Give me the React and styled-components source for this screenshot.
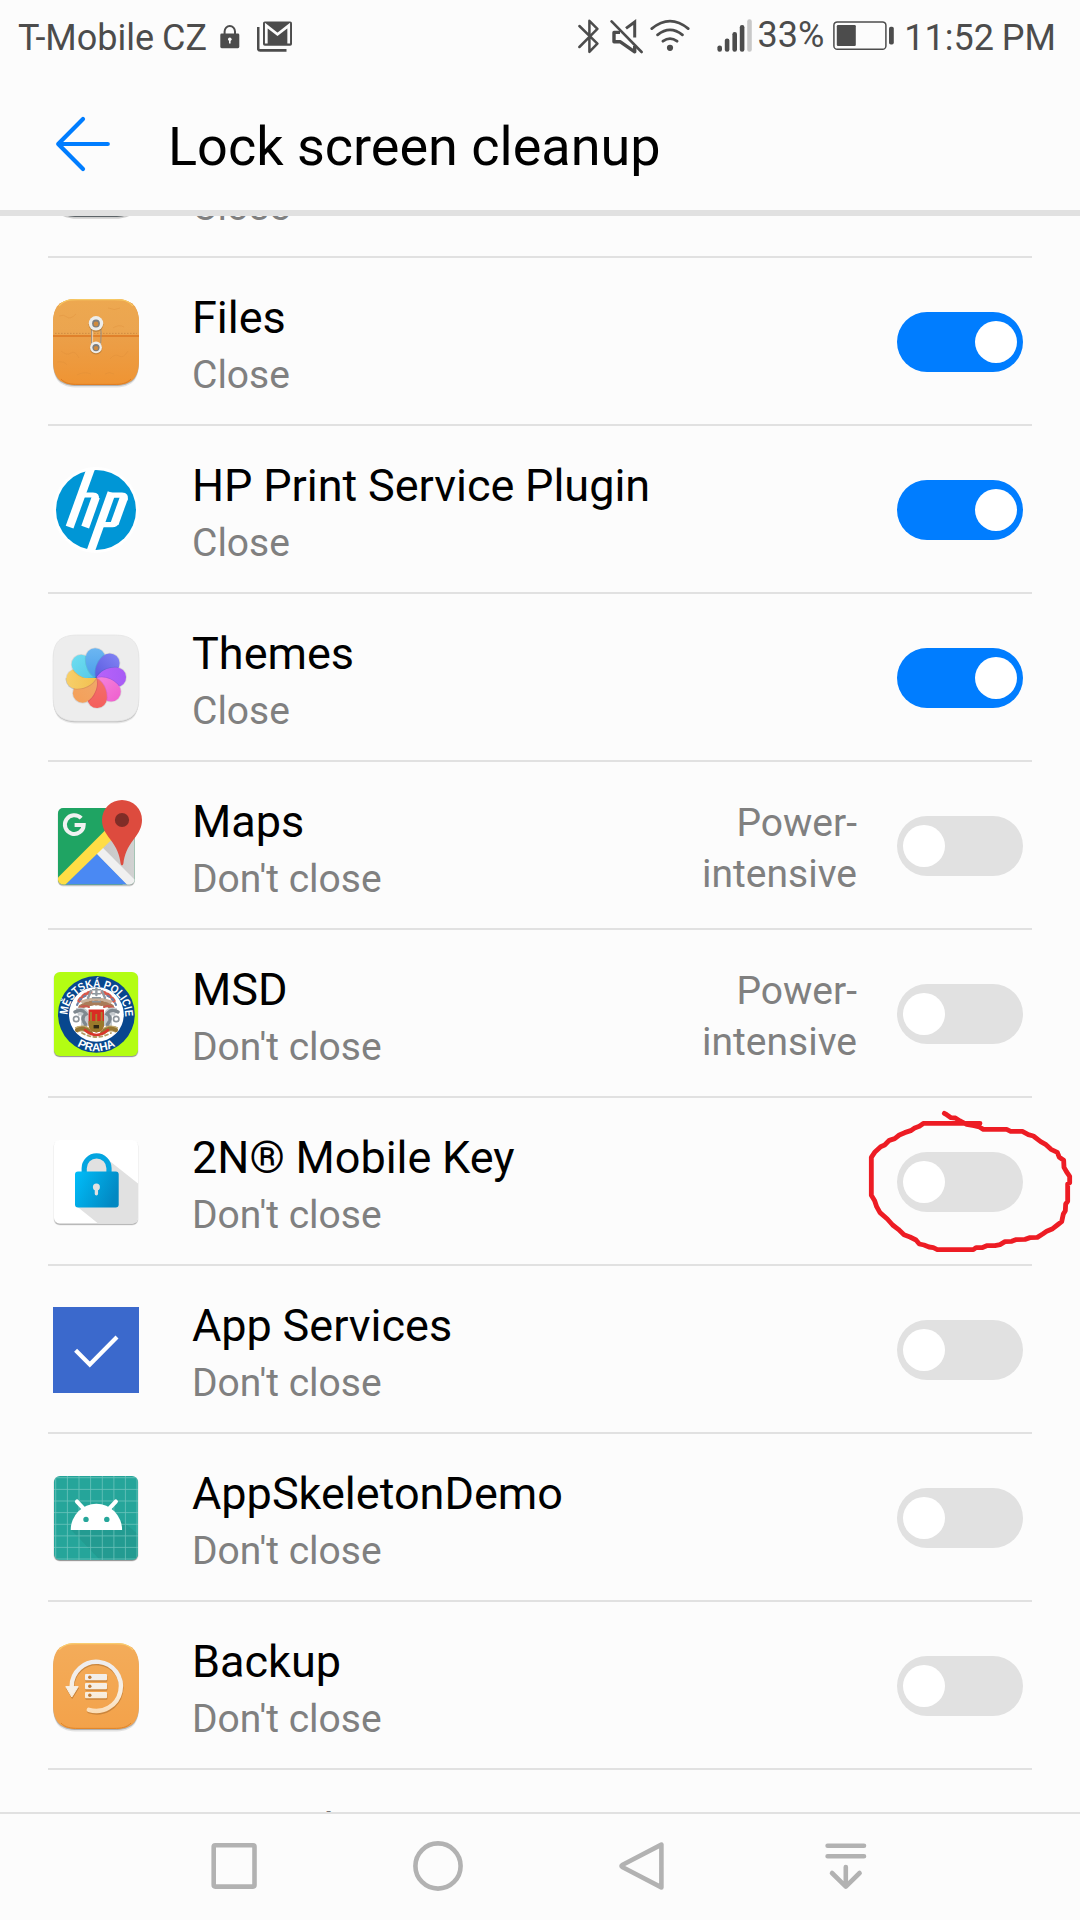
import React from 'react';
import styled, { createGlobalStyle } from 'styled-components';

const GlobalStyle = createGlobalStyle`
  *, *::before, *::after { box-sizing: border-box; }
  html, body { margin: 0; padding: 0; background: #fcfcfc; }
  body { overflow: hidden; }
`;

const Screen = styled.div`
  width: 1080px;
  height: 1920px;
  display: flex;
  flex-direction: column;
  background: #fcfcfc;
  font-family: Roboto, 'Liberation Sans', sans-serif;
  color: #000;
  overflow: hidden;
`;

const StatusBar = styled.div`
  flex: none;
  height: 72px;
  display: flex;
  align-items: flex-start;
  padding: 0 24px 0 18px;
  color: #4c4c4c;
`;

const StatusText = styled.span`
  font-size: 36px;
  line-height: 42px;
  white-space: nowrap;
  margin-top: ${(p) => p.$top}px;
  margin-left: ${(p) => p.$gap || 0}px;
  word-spacing: -1px;
`;

const StatusIcon = styled.svg`
  flex: none;
  display: block;
  margin-top: ${(p) => p.$top}px;
  margin-left: ${(p) => p.$gap || 0}px;
`;

const StatusGroup = styled.div`
  display: flex;
  align-items: flex-start;
  margin-left: ${(p) => (p.$end ? 'auto' : '0')};
`;

const TitleBar = styled.header`
  flex: none;
  height: 144px;
  display: flex;
  align-items: center;
  padding: 6px 54px 0;
  border-bottom: 6px solid #e1e1e1;
`;

const BackButton = styled.button`
  width: 58px;
  height: 58px;
  padding: 0;
  border: 0;
  background: none;
  display: flex;
`;

const Title = styled.h1`
  margin: 0 0 0 56px;
  padding-top: 6px;
  font-size: 54px;
  line-height: 64px;
  font-weight: 400;
  white-space: nowrap;
`;

const List = styled.main`
  flex: none;
  height: 1596px;
  overflow: hidden;
  padding: 0 48px;
`;

const Rows = styled.ul`
  list-style: none;
  margin: -126px 0 0;
  padding: 0;
`;

const Row = styled.li`
  height: 168px;
  display: flex;
  align-items: center;
  padding: 2px 9px 0 5px;
  border-bottom: 2px solid #e1e1e1;
`;

const AppIcon = styled.svg`
  flex: none;
  display: block;
  width: 86px;
  height: 86px;
  overflow: visible;
`;

const Labels = styled.div`
  flex: 1;
  min-width: 0;
  display: flex;
  flex-direction: column;
  gap: 8px;
  margin-left: 53px;
  padding-top: 5px;
`;

const AppName = styled.div`
  min-height: 53px;
  font-size: 45px;
  line-height: 53px;
  word-spacing: -0.5px;
  white-space: nowrap;
`;

const AppState = styled.div`
  min-height: 46px;
  font-size: 39px;
  line-height: 46px;
  color: #808080;
  white-space: nowrap;
`;

const Note = styled.div`
  width: 180px;
  margin-right: 40px;
  padding-top: 6px;
  font-size: 39px;
  line-height: 51px;
  text-align: right;
  color: #808080;
`;

const ToggleWrap = styled.div`
  position: relative;
  flex: none;
`;

const Toggle = styled.div`
  width: 126px;
  height: 60px;
  border-radius: 30px;
  padding: 0 6px;
  display: flex;
  align-items: center;
  justify-content: ${(p) => (p.$on ? 'flex-end' : 'flex-start')};
  background: ${(p) => (p.$on ? '#007dff' : '#e1e1e1')};
`;

const Knob = styled.span`
  width: 42px;
  height: 42px;
  border-radius: 50%;
  background: #fff;
`;

const Scribble = styled.svg`
  position: absolute;
  left: -47px;
  top: -62px;
  width: 230px;
  height: 180px;
  overflow: visible;
  pointer-events: none;
`;

const NavBar = styled.nav`
  flex: none;
  height: 108px;
  display: flex;
  justify-content: center;
  border-top: 2px solid #e1e1e1;
`;

const NavButton = styled.button`
  width: 204px;
  height: 104px;
  padding: 0;
  border: 0;
  background: none;
  display: flex;
  align-items: center;
  justify-content: center;
`;

const NavGlyph = styled.svg`
  display: block;
  width: 60px;
  height: 60px;
  fill: none;
  stroke: #b2b2b2;
  stroke-width: 4.6;
  stroke-linecap: round;
  stroke-linejoin: round;
`;

/* ---------- app icons, all on an 86 unit square ---------- */

const Shadow = ({ r = 6, o = 0.3, inset = 1 }) => (
  <>
    <rect x={inset - 0.5} y={inset + 0.5} width={87 - inset * 2} height={87 - inset * 2} rx={r} fill="#000" opacity={o * 0.4} />
    <rect x={inset} y={inset + 1} width={86 - inset * 2} height={86 - inset * 2} rx={r} fill="#000" opacity={o} />
  </>
);

const SQUIRCLE =
  'M0 25 C0 7 7 0 25 0 H61 C79 0 86 7 86 25 V61 C86 79 79 86 61 86 H25 C7 86 0 79 0 61 Z';

const HiddenIcon = () => (
  <AppIcon viewBox="0 0 86 86">
    <path d={SQUIRCLE} fill="#000" opacity="0.18" transform="translate(0 1.8)" />
    <path d={SQUIRCLE} fill="#5d6468" />
  </AppIcon>
);

const EmptyIcon = () => <AppIcon viewBox="0 0 86 86" />;

const FilesIcon = () => (
  <AppIcon viewBox="0 0 86 86">
    <defs>
      <linearGradient id="filesTop" x1="0" y1="0" x2="0" y2="1">
        <stop offset="0" stopColor="#eda850" />
        <stop offset="1" stopColor="#e8a04e" />
      </linearGradient>
      <linearGradient id="filesBody" x1="0" y1="0" x2="0" y2="1">
        <stop offset="0.4" stopColor="#eba04a" />
        <stop offset="1" stopColor="#ef9433" />
      </linearGradient>
      <clipPath id="filesFlap"><rect x="0" y="0" width="86" height="37" /></clipPath>
    </defs>
    <path d={SQUIRCLE} fill="#000" opacity="0.1" transform="translate(0 2.4)" />
    <path d={SQUIRCLE} fill="#000" opacity="0.22" transform="translate(0 1)" />
    <path d={SQUIRCLE} fill="url(#filesBody)" />
    <path d={SQUIRCLE} fill="url(#filesTop)" clipPath="url(#filesFlap)" />
    <path d="M6 7 C10 1.5 16 .7 25 .7 H61 C70 .7 76 1.5 80 7" fill="none" stroke="#f7c964" strokeWidth="1.2" />
    <path d="M8 80 C12 84.6 18 85.4 25 85.4 H61 C68 85.4 74 84.6 78 80" fill="none" stroke="#dd7c22" strokeWidth="1" />
    <path d="M0 37 H86" stroke="#e0812b" strokeWidth="1.8" />
    <path d="M2 34.4 H84" stroke="#c98740" strokeWidth="0.8" strokeDasharray="1.6 1.4" />
    <g fill="none" stroke="#d98a37" strokeWidth="0.6" opacity="0.55">
      <path d="M6 17 q5 -2 8 1 t9 -3 M55 9 q7 3 12 0 M60 29 q6 -4 11 -1 M8 52 q6 5 10 2 t8 5 M57 60 q5 -6 9 -3 t9 -5 M24 76 q7 -4 14 -1 M52 75 q4 -3 9 0 M4 63 q8 -1 10 3" />
    </g>
    <path d="M38.6 28 V48 M47.6 28 C49 36 47.6 41 47.4 48" fill="none" stroke="#9c9184" strokeWidth="1.1" />
    <path d="M39.6 30 V46" fill="none" stroke="#f3dcc0" strokeWidth="0.8" />
    <circle cx="43" cy="25.4" r="7.5" fill="#9c6a30" opacity="0.5" />
    <circle cx="43" cy="24.3" r="7.2" fill="#ededeb" />
    <circle cx="43" cy="24.5" r="3.9" fill="#7d7d7d" />
    <circle cx="43" cy="25" r="2.4" fill="#d08a3c" />
    <circle cx="43" cy="49.4" r="6.2" fill="#9c6a30" opacity="0.5" />
    <circle cx="43" cy="48.4" r="5.9" fill="#ededeb" />
    <circle cx="43" cy="48.6" r="3.6" fill="#7d7d7d" />
    <circle cx="43" cy="49.1" r="2.2" fill="#d08a3c" />
  </AppIcon>
);

const HpIcon = () => (
  <AppIcon viewBox="0 0 86 86">
    <defs><clipPath id="hpDisc"><circle cx="43" cy="43" r="41" /></clipPath></defs>
    <circle cx="43" cy="43" r="43" fill="#fff" />
    <circle cx="43" cy="43" r="40" fill="#0096d6" />
    <g clipPath="url(#hpDisc)" fill="none" stroke="#fff" strokeLinejoin="round">
      <path d="M38 1 L16.6 60.2" strokeWidth="8.2" />
      <path d="M30 28 H40 Q44.6 28 43 32" strokeWidth="5.2" />
      <path d="M42.9 30 L32.2 60.2" strokeWidth="8.2" />
      <path d="M58.6 25.6 L37.4 85" strokeWidth="8.2" />
      <path d="M56 28.1 H69 Q73.6 28.1 72 32.5" strokeWidth="5.2" />
      <path d="M71.2 30 L61.6 56.6" strokeWidth="8.2" />
      <path d="M63.5 55 Q62.4 57.7 59.5 57.7 H48" strokeWidth="5.2" />
    </g>
  </AppIcon>
);

const PETALS = [
  [270, '#f7cf6a', '#f2c050'],
  [315, '#6cdcf0', '#55c8e8'],
  [0, '#6cb6f2', '#4a9fea'],
  [45, '#7f80f2', '#5a5ce0'],
  [90, '#a75cf5', '#b862fa'],
  [135, '#ef62cf', '#f583dc'],
  [180, '#f45f5c', '#f4706c'],
  [225, '#f4a05a', '#f0a868'],
];
const PETAL = 'M0 0 C-7 -3.5 -11 -12 -10.6 -19.8 A9.7 9.7 0 0 1 8.9 -20.5 C9.6 -14 8 -7 0 0 Z';

const Petal = ({ angle, color }) => (
  <g transform={`rotate(${angle})`}>
    <path d={PETAL} fill="none" stroke="#222" strokeWidth="1.6" opacity="0.1" />
    <path d={PETAL} fill={color} />
  </g>
);

const ThemesIcon = () => (
  <AppIcon viewBox="0 0 86 86">
    <defs>
      {PETALS.map(([a, tip, root]) => (
        <linearGradient key={a} id={`petal${a}`} x1="0" y1="0" x2="0" y2="1">
          <stop offset="0" stopColor={tip} />
          <stop offset="1" stopColor={root} />
        </linearGradient>
      ))}
      <clipPath id="lowerHalf"><rect x="-32" y="0" width="32" height="32" /></clipPath>
    </defs>
    <path d={SQUIRCLE} fill="#000" opacity="0.08" transform="translate(0 2.6)" />
    <path d={SQUIRCLE} fill="#000" opacity="0.17" transform="translate(0 1.3)" />
    <path d={SQUIRCLE} fill="#ededed" stroke="#e4e4e4" strokeWidth="0.8" />
    <g transform="translate(43.2 43.1)">
      {PETALS.map(([a]) => <Petal key={a} angle={a} color={`url(#petal${a})`} />)}
      <g clipPath="url(#lowerHalf)"><Petal angle={270} color="url(#petal270)" /></g>
    </g>
  </AppIcon>
);

const MapsIcon = () => (
  <AppIcon viewBox="0 0 86 86">
    <defs>
      <clipPath id="mapTile"><rect x="5" y="5" width="76.6" height="76.4" rx="5" /></clipPath>
      <linearGradient id="mapGrey" x1="0" y1="0" x2="1" y2="0">
        <stop offset="0" stopColor="#c4c4c4" />
        <stop offset="1" stopColor="#d2d2d2" />
      </linearGradient>
    </defs>
    <rect x="4.6" y="6" width="77.4" height="77.4" rx="5.4" fill="#000" opacity="0.12" />
    <rect x="5" y="6" width="76.6" height="76.6" rx="5" fill="#000" opacity="0.22" />
    <g clipPath="url(#mapTile)">
      <rect x="5" y="5" width="77" height="77" fill="#1fa463" />
      <path d="M43.3 50.3 L82 10 V82 H70 Z" fill="url(#mapGrey)" />
      <path d="M12.5 81.5 L43.3 50.3 L74 81.5 Z" fill="#4a89f3" />
      <path d="M43.3 50.3 L49.3 44.3 L84 79 V84 H76.5 Z" fill="#f0f0f0" />
      <path d="M2 77.6 L58 21.6 L66 29.4 L10 84 Z" fill="#ffdd45" />
    </g>
    <path d="M28.2 15.2 A9.4 9.4 0 1 0 30.7 21.9 H21.6" fill="none" stroke="#f1f1f1" strokeWidth="4" />
    <path d="M69 -3 A20 20 0 0 0 49 17 C49 24 52 29.6 57.4 36.6 C63.6 44.6 66.6 52 67.6 60.6 Q67.8 62.4 69 62.4 Q70.2 62.4 70.4 60.6 C71.4 52 74.4 44.6 80.6 36.6 C86 29.6 89 24 89 17 A20 20 0 0 0 69 -3 Z" fill="#dd4b3e" />
    <circle cx="69" cy="17" r="7.1" fill="#802d27" />
  </AppIcon>
);

const PoliceIcon = () => (
  <AppIcon viewBox="0 0 86 86">
    <defs>
      <path id="ringTop" d="M14.6 45 A28.8 28.8 0 1 1 72.2 45" />
      <path id="ringBottom" d="M6.6 43.4 A36.8 36.8 0 0 0 80.2 43.4" />
    </defs>
    <Shadow />
    <rect x="1" y="1" width="84" height="84" rx="6" fill="#b3fd13" />
    <circle cx="43.4" cy="43.4" r="38.4" fill="#08478e" />
    <circle cx="43.4" cy="43.4" r="27.4" fill="#fff" />
    <g fill="none" strokeLinecap="round">
      <path d="M26 30 Q31 22 39 21 M61 30 Q56 22 48 21" stroke="#d8584a" strokeWidth="3.5" strokeDasharray="3 3" />
      <path d="M24 34 Q28 25 36 24 M63 34 Q59 25 51 24" stroke="#6c7fa4" strokeWidth="2" strokeDasharray="2 3.4" />
      <path d="M29 33 Q43 27 58 33" stroke="#c9b09a" strokeWidth="7" strokeLinecap="butt" />
      <path d="M28 36 Q43 28 59 36" stroke="#a97c58" strokeWidth="5" strokeDasharray="1.6 3.4" />
      <path d="M24 39 Q30 33 36 36 M63 39 Q57 33 51 36" stroke="#c85a4d" strokeWidth="2" />
      <path d="M43.4 18 V33" stroke="#8b949b" strokeWidth="9" strokeDasharray="1.6 2.4" strokeLinecap="butt" />
      <path d="M38 20 L35 27 M49 20 L52 27 M43.4 17.5 V24" stroke="#929aa2" strokeWidth="2.4" />
      <path d="M24 41 Q31 39 32 44 V55 M63 41 Q56 39 55 44 V55" stroke="#c6cbcf" strokeWidth="8" strokeLinecap="butt" />
      <path d="M22 41 Q29 37 33 43 Q27 47 33 54 Q29 61 24 56 M65 41 Q58 37 54 43 Q60 47 54 54 Q58 61 63 56" stroke="#7f888f" strokeWidth="3.4" strokeDasharray="3 2.4" />
      <circle cx="23.2" cy="48" r="2.7" stroke="#8f969c" strokeWidth="1.7" />
      <circle cx="63.2" cy="48" r="2.7" stroke="#8f969c" strokeWidth="1.7" />
      <path d="M23 59 Q32 55 38 62 M64 59 Q55 55 49 62" stroke="#c6ad72" strokeWidth="6" strokeLinecap="butt" />
      <path d="M24 59 Q32 55 38 62 M63 59 Q55 55 49 62" stroke="#957634" strokeWidth="4" strokeDasharray="2.4 2.6" />
      <path d="M32 59 Q43.4 69 55 59" stroke="#d8362c" strokeWidth="2.6" />
      <path d="M29 62 Q43 70 58 62" stroke="#b39a62" strokeWidth="1.8" strokeDasharray="3 3" />
    </g>
    <path d="M35.6 38.6 H51 V53 Q51 60 43.4 61.5 Q35.6 60 35.6 53 Z" fill="#d92b23" />
    <path d="M35.6 50 H51 V53 Q51 60 43.4 61.5 Q35.6 60 35.6 53 Z" fill="#9a792b" />
    <path d="M38 41 v9 M43.3 43 v8 M48.6 41 v9" stroke="#a98232" strokeWidth="1.8" />
    <path d="M40.6 54 h5.4 v3.4 h-5.4 z" fill="#2f2614" />
    <g fill="#fff" fontFamily="'Liberation Sans', sans-serif" fontWeight="700">
      <text fontSize="11.4"><textPath href="#ringTop" startOffset="1" textLength="90" lengthAdjust="spacingAndGlyphs">MĚSTSKÁ POLICIE</textPath></text>
      <text fontSize="11.4" textAnchor="middle"><textPath href="#ringBottom" startOffset="50%">PRAHA</textPath></text>
    </g>
  </AppIcon>
);

const KeyIcon = () => (
  <AppIcon viewBox="0 0 86 86">
    <defs>
      <linearGradient id="keyBody" x1="0" y1="0.1" x2="1" y2="0.5">
        <stop offset="0" stopColor="#00bcf8" />
        <stop offset="1" stopColor="#0288c2" />
      </linearGradient>
      <clipPath id="keyTile"><rect x="1" y="1" width="84" height="83.4" rx="5.5" /></clipPath>
    </defs>
    <Shadow o={0.2} />
    <rect x="1" y="1" width="84" height="83.4" rx="5.5" fill="#fff" />
    <g clipPath="url(#keyTile)">
      <path d="M56 21.5 L86 45.2 V86 H47 L24.3 67.8 Z" fill="#e1e1e1" />
      <path d="M31 33 V29.3 a12.6 12.6 0 0 1 25.2 0 V33 Z" fill="#e1e1e1" />
    </g>
    <path d="M31.2 35 V29.3 a12.3 12.3 0 0 1 24.8 0 V35" fill="none" stroke="#03a5e0" strokeWidth="5.2" />
    <rect x="22" y="32.6" width="43.7" height="35.8" rx="3" fill="url(#keyBody)" />
    <circle cx="43.4" cy="48.1" r="3.5" fill="#e1e1e1" />
    <path d="M43.4 48 V54.8" stroke="#e1e1e1" strokeWidth="3.3" strokeLinecap="round" />
  </AppIcon>
);

const ServicesIcon = () => (
  <AppIcon viewBox="0 0 86 86">
    <rect width="86" height="86" fill="#3b69cc" />
    <path d="M22.6 43.2 L36.8 57.4 L64 30" fill="none" stroke="#fff" strokeWidth="4.2" />
  </AppIcon>
);

const SkeletonIcon = () => (
  <AppIcon viewBox="0 0 86 86">
    <defs><clipPath id="skelTile"><rect x="1" y="1" width="84" height="84" rx="6" /></clipPath></defs>
    <Shadow />
    <g clipPath="url(#skelTile)">
      <rect width="86" height="86" fill="#26a69a" />
      <path d="M18 54.7 L48 86 H86 V60 L69 46 Z" fill="#1f9187" opacity="0.5" />
      <path
        d={[2.7, 14.4, 26, 37.6, 49.3, 60.9, 72.4, 84].map((v) => `M${v} 0 V86 M0 ${v} H86`).join(' ')}
        stroke="#7fcbc4"
        strokeWidth="0.8"
        opacity="0.8"
      />
    </g>
    <path d="M17.7 55 a25.7 26.2 0 0 1 51.4 0 Z" fill="#fff" />
    <path d="M24 26.6 L30.6 33.6 M62.8 26.6 L56.2 33.6" stroke="#fff" strokeWidth="4.2" strokeLinecap="round" />
    <circle cx="33" cy="44.4" r="2.7" fill="#26a69a" />
    <circle cx="53.8" cy="44.4" r="2.7" fill="#26a69a" />
  </AppIcon>
);

const BackupMark = ({ color }) => (
  <g>
    <path d="M18.7 45 V43.3 A24.6 24.6 0 1 1 35.8 66.8" fill="none" stroke={color} strokeWidth="4.4" strokeLinecap="round" />
    <path d="M12.8 43.6 H25.2 L18.8 54 Z" fill={color} stroke={color} strokeWidth="1" strokeLinejoin="round" />
    {[31, 40, 49].map((y) => <rect key={y} x="32" y={y} width="22" height="6.3" rx="1" fill={color} />)}
  </g>
);

const BackupIcon = () => (
  <AppIcon viewBox="0 0 86 86">
    <defs>
      <linearGradient id="bakBg" x1="0" y1="0" x2="0" y2="1">
        <stop offset="0" stopColor="#f3ac5a" />
        <stop offset="1" stopColor="#f3a24a" />
      </linearGradient>
      <linearGradient id="bakMark" gradientUnits="userSpaceOnUse" x1="0" y1="17" x2="0" y2="70">
        <stop offset="0" stopColor="#ededf0" />
        <stop offset="0.6" stopColor="#f8efe2" />
        <stop offset="1" stopColor="#fbdcb4" />
      </linearGradient>
    </defs>
    <path d={SQUIRCLE} fill="#000" opacity="0.1" transform="translate(0 2.4)" />
    <path d={SQUIRCLE} fill="#000" opacity="0.22" transform="translate(0 1)" />
    <path d={SQUIRCLE} fill="url(#bakBg)" />
    <path d="M6 7 C10 1.5 16 .7 25 .7 H61 C70 .7 76 1.5 80 7" fill="none" stroke="#f9cd70" strokeWidth="1.2" />
    <path d="M8 80 C12 84.6 18 85.4 25 85.4 H61 C68 85.4 74 84.6 78 80" fill="none" stroke="#e08428" strokeWidth="1" />
    <g transform="translate(0.4 1.4)" opacity="0.5"><BackupMark color="#a5672a" /></g>
    <BackupMark color="url(#bakMark)" />
    {[34.2, 43.2, 52.2].map((y) => <circle key={y} cx="36.8" cy={y} r="1.7" fill="#c07b35" />)}
  </AppIcon>
);

const APPS = [
  { id: 'previous', name: '', state: 'Close', Icon: HiddenIcon },
  { id: 'files', name: 'Files', state: 'Close', on: true, Icon: FilesIcon },
  { id: 'hp', name: 'HP Print Service Plugin', state: 'Close', on: true, Icon: HpIcon },
  { id: 'themes', name: 'Themes', state: 'Close', on: true, Icon: ThemesIcon },
  { id: 'maps', name: 'Maps', state: "Don't close", note: 'Power-intensive', Icon: MapsIcon },
  { id: 'msd', name: 'MSD', state: "Don't close", note: 'Power-intensive', Icon: PoliceIcon },
  { id: 'key', name: '2N® Mobile Key', state: "Don't close", circled: true, Icon: KeyIcon },
  { id: 'services', name: 'App Services', state: "Don't close", Icon: ServicesIcon },
  { id: 'skeleton', name: 'AppSkeletonDemo', state: "Don't close", Icon: SkeletonIcon },
  { id: 'backup', name: 'Backup', state: "Don't close", Icon: BackupIcon },
  { id: 'barcode', name: 'Barcode', state: '', Icon: EmptyIcon },
];

const HandDrawnCircle = () => (
  <Scribble viewBox="0 0 690 540">
    <path
      d="M283 70 L290 74 L303 83 L316 84 L330 93 L350 103 L372 107 L388 111 L400 118 L470 118 L482 124 L517 124 L535 134 L550 138 L572 155 L588 164 L603 178 L622 187 L628 202 L641 211 L642 232 L650 246 L659 259 V278 L653 282 V334 L647 342 L646 362 L640 372 L635 395 L622 405 L608 416 L590 424 L578 432 L562 442 L540 443 L525 448 L497 449 L485 454 L465 455 L450 464 L435 467 L410 467 L396 473 L378 473 L370 479 H262 L250 473 L237 471 L222 465 L208 462 L198 450 L180 441 L162 434 L145 418 L128 405 L112 387 L90 368 L80 350 L74 332 L64 316 V202 L74 187 L92 170 L104 165 L118 151 L134 146 L148 135 L164 128 L182 122 L194 114 L208 109 L221 100 H390"
      fill="none"
      stroke="#ed1c24"
      strokeWidth="14.5"
      strokeLinejoin="round"
      strokeLinecap="round"
    />
  </Scribble>
);

const AppRow = ({ app }) => (
  <Row>
    <app.Icon />
    <Labels>
      <AppName>{app.name}</AppName>
      <AppState>{app.state}</AppState>
    </Labels>
    {app.note && <Note>{app.note}</Note>}
    {app.id !== 'previous' && app.id !== 'barcode' && (
      <ToggleWrap>
        <Toggle $on={app.on} role="switch" aria-checked={!!app.on}><Knob /></Toggle>
        {app.circled && <HandDrawnCircle />}
      </ToggleWrap>
    )}
  </Row>
);

const Status = () => (
  <StatusBar>
    <StatusGroup>
      <StatusText $top={17}>T-Mobile CZ</StatusText>
      <StatusIcon $top={25} $gap={13} width="20" height="24" viewBox="0 0 20 24">
        <path d="M4.6 10 V6.6 a5.2 5.6 0 0 1 10.4 0 V10" fill="none" stroke="#4c4c4c" strokeWidth="2" />
        <rect x="0.3" y="8.6" width="19" height="14.6" rx="1.4" fill="#4c4c4c" />
        <circle cx="9.8" cy="14.2" r="1.8" fill="#fcfcfc" />
        <path d="M9.8 14 V18.6" stroke="#fcfcfc" strokeWidth="1.6" />
      </StatusIcon>
      <StatusIcon $top={21} $gap={17} width="36" height="32" viewBox="0 0 36 32">
        <path d="M1.2 6 V27.4 Q1.2 29.4 3.2 29.4 H29.5" fill="none" stroke="#4c4c4c" strokeWidth="2.6" />
        <rect x="6" y="0.4" width="29" height="24.4" rx="1.8" fill="#4c4c4c" />
        <path d="M9.3 22.6 V4.6 L20.5 13.2 L31.7 4.6 V22.6" fill="none" stroke="#fcfcfc" strokeWidth="2.7" />
      </StatusIcon>
    </StatusGroup>
    <StatusGroup $end>
      <StatusIcon $top={19} width="22" height="35" viewBox="0 0 22 35" fill="none" stroke="#4c4c4c" strokeWidth="2.5" strokeLinejoin="round" strokeLinecap="round">
        <path d="M1.4 7 L19.4 24.6 L11.4 32.8 V1.8 L19.4 9.8 L1.4 28" />
      </StatusIcon>
      <StatusIcon $top={19} $gap={10} width="34" height="36" viewBox="0 0 34 36" fill="none" stroke="#4c4c4c">
        <path d="M16 9.4 L24.7 3 V18.6" strokeWidth="3" />
        <path d="M10 13.4 H4 V22.8 H10.4 L24.7 32.8 V27" strokeWidth="3.4" strokeLinejoin="round" />
        <path d="M1.6 2.4 L31.6 33" strokeWidth="2.6" strokeLinecap="round" />
      </StatusIcon>
      <StatusIcon $top={19} $gap={6} width="40" height="34" viewBox="0 0 40 34" fill="none" stroke="#4c4c4c" strokeWidth="2.8" strokeLinecap="round">
        <path d="M1.8 9.6 Q20 -5.4 38.2 9.6 M7.6 15.8 Q20 6 32.4 15.8 M13 22.2 Q20 17 27 22.2" />
        <circle cx="20" cy="28.8" r="3.1" fill="#4c4c4c" stroke="none" />
      </StatusIcon>
      <StatusIcon $top={19} $gap={27} width="36" height="34" viewBox="0 0 36 34" fill="#4c4c4c">
        <rect x="0.4" y="26.4" width="4.6" height="6.4" rx="2.2" />
        <rect x="7.8" y="19.4" width="4.6" height="13.4" rx="2.2" />
        <rect x="15.4" y="13" width="4.6" height="19.8" rx="2.2" />
        <rect x="22.8" y="6" width="4.6" height="26.8" rx="2.2" />
        <rect x="30.2" y="0.2" width="4.6" height="32.6" rx="2.2" fill="#c8c8c8" />
      </StatusIcon>
      <StatusText $top={14} $gap={4}>33%</StatusText>
      <StatusIcon $top={21} $gap={9} width="62" height="30" viewBox="0 0 62 30">
        <rect x="0.9" y="0.9" width="52" height="27.4" rx="3.4" fill="none" stroke="#4c4c4c" strokeWidth="1.5" />
        <rect x="3.8" y="4" width="19" height="21" rx="1.2" fill="#4c4c4c" />
        <rect x="56" y="5.8" width="4.8" height="17.8" rx="1.8" fill="#4c4c4c" />
      </StatusIcon>
      <StatusText $top={17} $gap={9}>11:52 PM</StatusText>
    </StatusGroup>
  </StatusBar>
);

export default function App() {
  return (
    <>
      <GlobalStyle />
      <Screen>
        <Status />
        <TitleBar>
          <BackButton aria-label="Back">
            <svg width="58" height="58" viewBox="0 0 58 58" fill="none" stroke="#007dff" strokeWidth="4.2" strokeLinecap="round" strokeLinejoin="round">
              <path d="M29 4 L4.2 29 L29 54 M4.2 29 H53.8" />
            </svg>
          </BackButton>
          <Title>Lock screen cleanup</Title>
        </TitleBar>
        <List>
          <Rows>{APPS.map((app) => <AppRow key={app.id} app={app} />)}</Rows>
        </List>
        <NavBar>
          <NavButton aria-label="Recents">
            <NavGlyph viewBox="0 0 60 60"><rect x="9.7" y="9.2" width="40.8" height="41.4" rx="1.5" /></NavGlyph>
          </NavButton>
          <NavButton aria-label="Home">
            <NavGlyph viewBox="0 0 60 60"><circle cx="30" cy="30" r="22.6" /></NavGlyph>
          </NavButton>
          <NavButton aria-label="Back">
            <NavGlyph viewBox="0 0 60 60"><path d="M49.4 8.6 V51.4 L10.2 31 Q8.8 30 10.2 29 Z" /></NavGlyph>
          </NavButton>
          <NavButton aria-label="Hide navigation bar">
            <NavGlyph viewBox="0 0 60 60"><path d="M11.6 9.7 H48 M11.6 20.3 H48 M29.8 31 V50 M16 37 L29.8 50.6 L43.6 37" /></NavGlyph>
          </NavButton>
        </NavBar>
      </Screen>
    </>
  );
}
